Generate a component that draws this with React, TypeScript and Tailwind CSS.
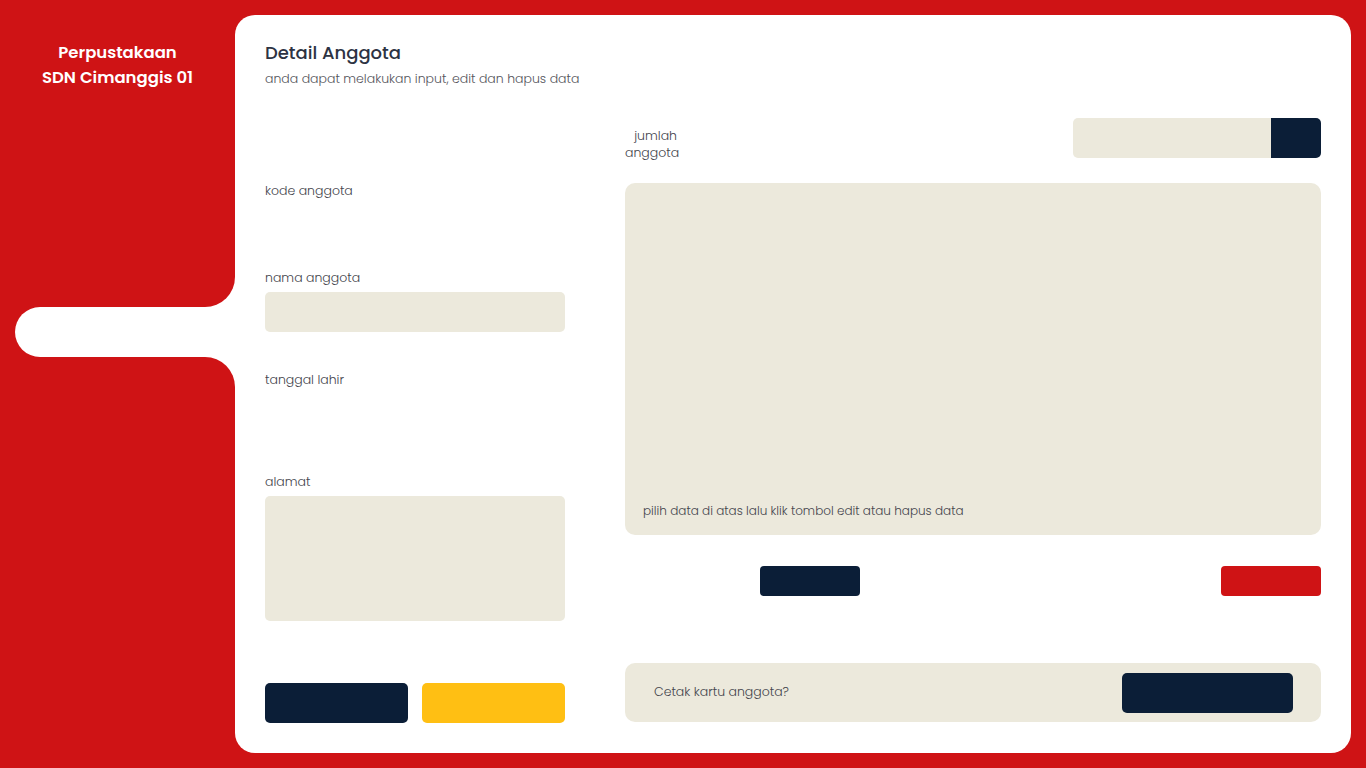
const FONT = "font-['Poppins','Open_Sans',sans-serif]";

function Field({ label, className, top }: { label: string; className: string; top: string }) {
    return (
        <div className={top}>
            <p className="h-5 text-[12.5px] leading-5 font-light text-[#45454d]">{label}</p>
            <div className={`mt-[4px] rounded-[5px] ${className}`} />
        </div>
    );
}

export default function App() {
    return (
        <div className={`flex h-[768px] w-full bg-[#cf1315] ${FONT}`}>
            {/* sidebar */}
            <aside className="flex w-[235px] shrink-0 flex-col">
                <div className="pt-[40px] text-center text-[16.5px] font-semibold leading-[25px] text-white">
                    <p>Perpustakaan</p>
                    <p>SDN Cimanggis 01</p>
                </div>

                <div className="mt-[187px] flex h-[30px] justify-end">
                    <div className="h-[30px] w-[30px] bg-white">
                        <div className="h-full w-full rounded-br-[30px] bg-[#cf1315]" />
                    </div>
                </div>
                <div className="ml-[15px] h-[50px] rounded-l-[25px] bg-white" />
                <div className="flex h-[30px] justify-end">
                    <div className="h-[30px] w-[30px] bg-white">
                        <div className="h-full w-full rounded-tr-[30px] bg-[#cf1315]" />
                    </div>
                </div>
            </aside>

            {/* main card */}
            <main className="my-[15px] mr-[15px] flex flex-1 flex-col rounded-[20px] bg-white px-[30px] pt-[24px]">
                <h1 className="text-[18px] font-medium leading-[28px] text-[#2d3343]">Detail Anggota</h1>
                <p className="mt-[2px] text-[12.5px] font-light leading-5 text-[#55555c]">
                    anda dapat melakukan input, edit dan hapus data
                </p>

                <div className="mt-[29px] flex gap-[60px]">
                    {/* form */}
                    <div className="flex w-[300px] shrink-0 flex-col">
                        <Field top="mt-[63px]" label="kode anggota" className="h-10 bg-white" />
                        <Field top="mt-[23px]" label="nama anggota" className="h-10 bg-[#ece9dc]" />
                        <Field top="mt-[38px]" label="tanggal lahir" className="h-10 bg-white" />
                        <Field top="mt-[38px]" label="alamat" className="h-[125px] bg-[#ece9dc]" />
                        <div className="mt-[62px] flex gap-[14px]">
                            <div className="h-10 flex-1 rounded-[5px] bg-[#0b1e37]" />
                            <div className="h-10 flex-1 rounded-[5px] bg-[#ffbf13]" />
                        </div>
                    </div>

                    {/* table */}
                    <div className="flex flex-1 flex-col">
                        <div className="flex h-10 items-start justify-between">
                            <p className="mt-[9px] w-[52px] text-right text-[12.5px] font-light leading-[17px] text-[#45454d]">
                                jumlah anggota
                            </p>
                            <div className="flex h-10 w-[248px] overflow-hidden rounded-[5px]">
                                <div className="flex-1 bg-[#ece9dc]" />
                                <div className="w-[50px] bg-[#0b1e37]" />
                            </div>
                        </div>

                        <div className="mt-[25px] flex h-[352px] flex-col justify-end rounded-[10px] bg-[#ece9dc] px-[18px] pb-[14px]">
                            <p className="text-[12px] font-light leading-5 text-[#45454d]">
                                pilih data di atas lalu klik tombol edit atau hapus data
                            </p>
                        </div>

                        <div className="mt-[31px] flex h-[30px] justify-between pl-[135px]">
                            <div className="w-[100px] rounded-[4px] bg-[#0b1e37]" />
                            <div className="w-[100px] rounded-[4px] bg-[#cf1315]" />
                        </div>

                        <div className="mt-[67px] flex h-[59px] items-center justify-between rounded-[10px] bg-[#ece9dc] pl-[29px] pr-[28px]">
                            <p className="text-[12.5px] font-light text-[#45454d]">Cetak kartu anggota?</p>
                            <div className="h-10 w-[171px] rounded-[5px] bg-[#0b1e37]" />
                        </div>
                    </div>
                </div>
            </main>
        </div>
    );
}
